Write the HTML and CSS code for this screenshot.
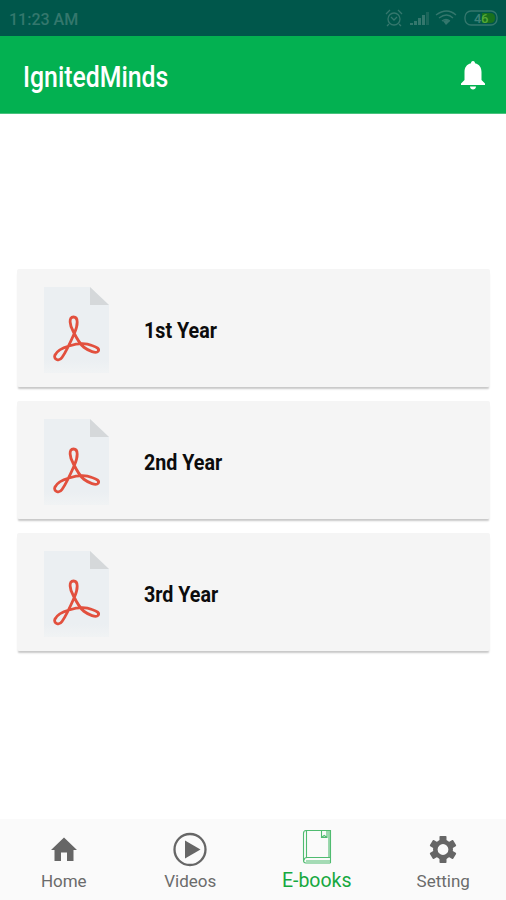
FILE: index.html
```
<!DOCTYPE html>
<html lang="en">
<head>
	<meta charset="UTF-8">
	<title>IgnitedMinds</title>
	<link rel="stylesheet" href="styles.css">
</head>
<body>
<svg class="defs" width="0" height="0">
	<linearGradient id="paper" x1="0" y1="0" x2="0" y2="1">
		<stop offset=".85" stop-color="#ebeff2"/>
		<stop offset="1" stop-color="#f1f3f4"/>
	</linearGradient>
	<symbol id="pdf" viewBox="0 0 66 86">
		<path fill="url(#paper)" d="M0 0h46l19 18v68H0z"/>
		<path fill="#d5d8da" d="M46 0l19 18H46z"/>
		<path fill="none" stroke="#e2503e" stroke-width="2.8" stroke-linejoin="round" d="M29.500 45C25.500 38 24.500 30 29.500 30C34.500 30 34 38 30.500 46C27 54 22 65 18 70.500C15 75 9 72 11 68C13 64 18 61 25 59C33 56.500 42 56 48 58.500C53 60 56 62 54 64.500C52 67 45 64 39.500 60C35 56 32 50 29.500 45z"/>
	</symbol>
</svg>
<div class="status">
	<span class="time">11:23 AM</span>
	<svg class="status-icons" width="116" height="20" viewBox="0 0 116 20">
		<g fill="none" stroke="#34776d" stroke-width="1.3">
			<circle cx="10" cy="11" r="6"/>
			<path d="M2 6l4-4M18 6l-4-4M5 16l-2 2M15 16l2 2M7 9l3 3 3-3"/>
			<path d="M52 7q11-8 20 0M55 10q8-6 14 0M58 13q4-3 8 0"/>
			<rect x="81" y="3" width="32" height="14" rx="6"/>
		</g>
		<g fill="#34776d">
			<path d="M26 15h3v2h-3zM30 13h3v4h-3zM34 10h3v7h-3zM38 7h3v10h-3zM59 13l3 4 4-4q-3-2-7 0z"/>
			<path fill="#1b665b" d="M42 4h3v13h-3z"/>
		</g>
		<path fill="#19701d" d="M98 5h8q5 0 5 5t-5 5h-8z"/>
		<text class="battery" x="90" y="15">4</text>
		<text class="battery charged" x="97" y="15">6</text>
	</svg>
</div>
<div class="header">
	<h1>IgnitedMinds</h1>
	<svg class="bell" width="24" height="29" viewBox="0 0 24 29">
		<path fill="#fff" d="M12 0c1.500 0 2 1 2 2.300 4.500 1 6.500 4.500 6.500 8.700v8l3.500 3.500v1.500H0v-1.500L3.500 19v-8c0-4.200 2-7.700 6.500-8.700C10 1 10.500 0 12 0zM9 25.500h6c0 2-1.500 3-3 3s-3-1-3-3z"/>
	</svg>
</div>
<div class="list">
	<div class="card">
		<svg class="pdf" width="66" height="86"><use href="#pdf"/></svg>
		<span class="year">1st Year</span>
	</div>
	<div class="card">
		<svg class="pdf" width="66" height="86"><use href="#pdf"/></svg>
		<span class="year">2nd Year</span>
	</div>
	<div class="card">
		<svg class="pdf" width="66" height="86"><use href="#pdf"/></svg>
		<span class="year">3rd Year</span>
	</div>
</div>
<div class="nav">
	<div class="tab">
		<svg width="36" height="36" viewBox="0 0 36 36">
			<path fill="#666" d="M18 6.500L31 19h-3.500v11H21v-8.500h-6V30H8.500V19H5z"/>
		</svg>
		<span>Home</span>
	</div>
	<div class="tab">
		<svg width="36" height="36" viewBox="0 0 36 36">
			<circle cx="18" cy="18.500" r="15.500" fill="none" stroke="#666" stroke-width="2.300"/>
			<path fill="#666" d="M13 9.500L28.500 18.500 13 27.500z"/>
		</svg>
		<span>Videos</span>
	</div>
	<div class="tab on">
		<svg width="36" height="36" viewBox="0 0 36 36">
			<path fill="none" stroke="#4fbb70" stroke-width="1.100" d="M31.500 32V-.5H7q-2.500 0-2.500 3v27q0 2.500 2.500 2.500h24.500M30 27V0M7.500 0v27M5 29.500q0-3 3-3h23.500M7 30h24M22.500 0v6.500h5.500V0M22.500 6.500l2.700-2 2.800 2"/>
		</svg>
		<span>E-books</span>
	</div>
	<div class="tab">
		<svg width="36" height="36" viewBox="0 0 36 36">
			<circle cx="18" cy="18.500" r="7.700" fill="none" stroke="#666" stroke-width="4.600"/>
			<g fill="#666">
				<rect id="tooth" x="14.500" y="5" width="7" height="5.500" rx=".8"/>
				<use href="#tooth" transform="rotate(60 18 18.500)"/>
				<use href="#tooth" transform="rotate(120 18 18.500)"/>
				<use href="#tooth" transform="rotate(180 18 18.500)"/>
				<use href="#tooth" transform="rotate(240 18 18.500)"/>
				<use href="#tooth" transform="rotate(300 18 18.500)"/>
			</g>
		</svg>
		<span>Setting</span>
	</div>
</div>
</body>
</html>
```
FILE: styles.css
```
* {
	margin: 0;
	padding: 0;
	box-sizing: border-box;
}

body {
	display: flex;
	flex-direction: column;
	height: 900px;
	overflow: hidden;
	background: #fff;
	font-family: Roboto, "Liberation Sans", sans-serif;
}

svg {
	display: block;
	flex: none;
	overflow: visible;
}

.defs {
	height: 0;
}

.status {
	display: flex;
	align-items: center;
	justify-content: space-between;
	height: 36px;
	padding: 0 6px 0 9px;
	background: #00574b;
}

.time {
	padding-top: 2px;
	font-size: 16px;
	font-weight: 500;
	color: #34776d;
}

.battery {
	font-size: 13px;
	font-weight: 500;
	fill: #3d8178;
}

.charged {
	fill: #55a838;
}

.header {
	display: flex;
	align-items: center;
	justify-content: space-between;
	height: 78px;
	padding: 0 21px 0 23px;
	background: #03b151;
	border-bottom: 1px solid #48c27d;
}

.bell {
	margin-top: 2px;
}

h1 {
	padding-top: 4px;
	font-size: 29px;
	font-weight: 500;
	color: #fff;
	transform: scaleX(.855);
	transform-origin: left;
}

.list {
	display: flex;
	flex: 1;
	flex-direction: column;
	gap: 14px;
	padding: 155px 16px 0 17px;
}

.card {
	display: flex;
	align-items: center;
	height: 118px;
	padding-left: 27px;
	background: #f5f5f5;
	border-radius: 2px;
	box-shadow: 0 3px 2px -1px #c8c8c8;
}

.pdf {
	margin-top: 3px;
}

.year {
	margin: 3px 0 0 34px;
	font-size: 22.5px;
	font-weight: 700;
	color: #0c0c0c;
	transform: scaleX(.875);
	transform-origin: left;
}

.nav {
	display: flex;
	height: 81px;
	background: #fafafa;
}

.tab {
	display: flex;
	flex: 1;
	flex-direction: column;
	align-items: center;
	padding: 12px 0 0 1px;
	font-size: 17px;
	line-height: 20px;
	color: #6b6b6b;
}

.tab span {
	margin-top: 4px;
}

.on {
	font-size: 19.5px;
	color: #16a83f;
}
```
